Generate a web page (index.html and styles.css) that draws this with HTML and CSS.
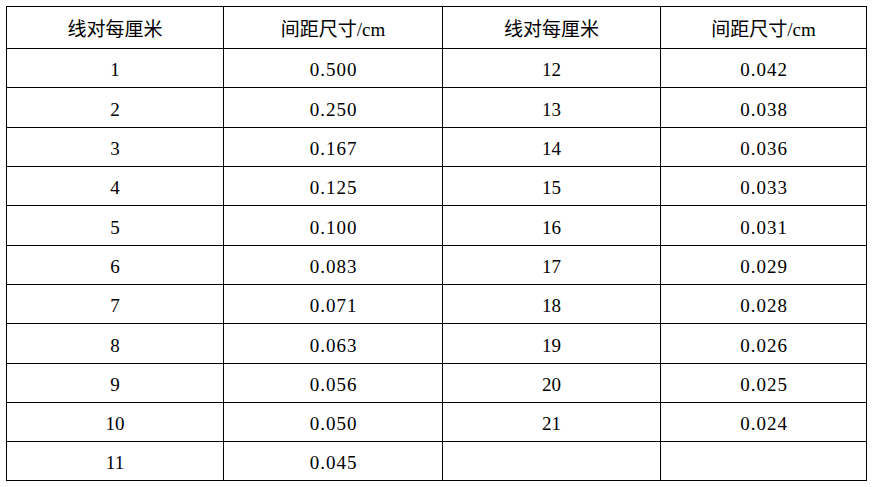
FILE: index.html
```html
<!DOCTYPE html>
<html lang="zh">
<head>
<meta charset="utf-8">
<link rel="stylesheet" href="styles.css">
</head>
<body>
<div class="table">
  <div class="cell">线对每厘米</div><div class="cell">间距尺寸/cm</div><div class="cell">线对每厘米</div><div class="cell">间距尺寸/cm</div>
  <div class="cell">1</div><div class="cell num">0.500</div><div class="cell">12</div><div class="cell num">0.042</div>
  <div class="cell">2</div><div class="cell num">0.250</div><div class="cell">13</div><div class="cell num">0.038</div>
  <div class="cell">3</div><div class="cell num">0.167</div><div class="cell">14</div><div class="cell num">0.036</div>
  <div class="cell">4</div><div class="cell num">0.125</div><div class="cell">15</div><div class="cell num">0.033</div>
  <div class="cell">5</div><div class="cell num">0.100</div><div class="cell">16</div><div class="cell num">0.031</div>
  <div class="cell">6</div><div class="cell num">0.083</div><div class="cell">17</div><div class="cell num">0.029</div>
  <div class="cell">7</div><div class="cell num">0.071</div><div class="cell">18</div><div class="cell num">0.028</div>
  <div class="cell">8</div><div class="cell num">0.063</div><div class="cell">19</div><div class="cell num">0.026</div>
  <div class="cell">9</div><div class="cell num">0.056</div><div class="cell">20</div><div class="cell num">0.025</div>
  <div class="cell">10</div><div class="cell num">0.050</div><div class="cell">21</div><div class="cell num">0.024</div>
  <div class="cell">11</div><div class="cell num">0.045</div><div class="cell"></div><div class="cell"></div>
</div>
</body>
</html>
```
FILE: styles.css
```css
html, body {
  margin: 0;
  padding: 0;
  background: #fff;
}
body {
  padding: 6px 0 0 6px;
  font-family: "Liberation Serif", "Noto Sans CJK SC", serif;
  font-size: 19px;
  color: #000;
}
.table {
  display: inline-grid;
  background: #000;
  padding: 1px;
  gap: 1px;
  grid-template-columns: 216px 218px 217px 205px;
  grid-template-rows: 41px 38px 39px 38px 38px 39px 38px 38px 39px 38px 38px 38px;
}
.cell {
  background: #fff;
  display: flex;
  align-items: center;
  justify-content: center;
  padding-top: 3px;
  line-height: 1;
  white-space: nowrap;
}
.num {
  letter-spacing: 1px;
  padding-left: 1px;
}
```
